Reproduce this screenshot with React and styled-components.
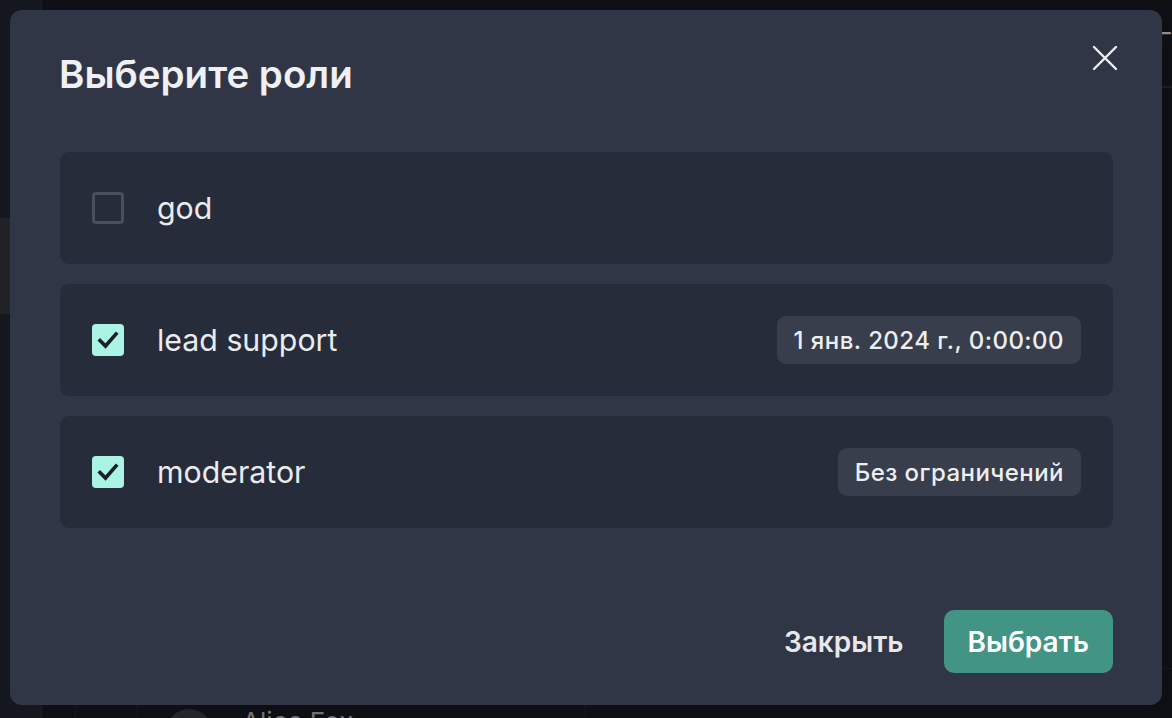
import React, { useState } from "react";
import styled, { createGlobalStyle } from "styled-components";

const GlobalStyle = createGlobalStyle`
  html, body {
    margin: 0;
    padding: 0;
    height: 100%;
    background: #0d0f14;
    font-family: Inter, "Noto Sans", "DejaVu Sans", sans-serif;
    overflow: hidden;
  }
  * { box-sizing: border-box; }
`;

/* page underneath the dialog */
const Page = styled.div`
  display: flex;
  width: 1172px;
  height: 718px;
  background: #0d0f14;
`;

const Sidebar = styled.div`
  display: flex;
  flex-direction: column;
  width: 42px;
  padding-top: 218px;
  background: #15171e;
  border-right: 1px solid #1b1d24;
`;

const SideItem = styled.div`
  height: 96px;
  background: #202226;
`;

const Main = styled.div`
  flex: 1;
  display: flex;
  flex-direction: column;
`;

const TopBar = styled.div`
  height: 88px;
  border-bottom: 2px solid #1a1c22;
  display: flex;
  justify-content: flex-end;
  align-items: flex-start;
  padding-top: 26px;
  color: #8a8d94;
  font-size: 26px;
`;

const Spacer = styled.div`
  flex: 1;
`;

const TableRow = styled.div`
  height: 50px;
  display: flex;
  border-top: 1px solid #15171c;
  overflow: hidden;
`;

const Cell = styled.div`
  width: ${(p) => p.w}px;
  height: 100%;
  border-right: 1px solid #15171c;
  display: flex;
  align-items: flex-start;
  gap: 30px;
  padding-top: 40px;
`;

const Avatar = styled.div`
  width: 46px;
  height: 46px;
  border-radius: 50%;
  background: #23252b;
  margin-left: 28px;
  flex-shrink: 0;
`;

const UserName = styled.span`
  color: #6d7079;
  font-size: 26px;
  line-height: 26px;
`;

/* dialog */
const Overlay = styled.div`
  position: fixed;
  inset: 0;
  padding: 10px 10px 13px 10px;
  display: flex;
`;

const Dialog = styled.div`
  position: relative;
  flex: 1;
  display: flex;
  flex-direction: column;
  background: #303646;
  border-radius: 12px;
  padding: 40px 49px 32px 50px;
  color: #eceef2;
`;

const Title = styled.h2`
  margin: 0 0 0 -1px;
  font-size: 38.5px;
  font-weight: 600;
  line-height: 48px;
  color: #eef0f3;
`;

const CloseButton = styled.button`
  position: absolute;
  top: 34px;
  right: 43px;
  width: 28px;
  height: 28px;
  padding: 0;
  border: none;
  background: none;
  color: #eef0f3;
  cursor: pointer;
  display: flex;
  align-items: center;
  justify-content: center;
`;

const List = styled.div`
  display: flex;
  flex-direction: column;
  gap: 20px;
  margin-top: 54px;
`;

const Row = styled.label`
  display: flex;
  align-items: center;
  height: 112px;
  padding: 0 32px;
  background: #272c3a;
  border-radius: 9px;
  cursor: pointer;
`;

const Box = styled.span`
  width: 32px;
  height: 32px;
  border-radius: 4px;
  flex-shrink: 0;
  display: flex;
  align-items: center;
  justify-content: center;
  background: ${(p) => (p.checked ? "#abf3e5" : "transparent")};
  border: ${(p) => (p.checked ? "none" : "3px solid #4a4f5c")};
`;

const Label = styled.span`
  margin-left: 33px;
  font-size: 30.3px;
  font-weight: 400;
  color: #e9ebef;
  flex: 1;
`;

const Badge = styled.span`
  height: 48px;
  padding: 0 17px;
  display: flex;
  align-items: center;
  background: #383e4b;
  border-radius: 9px;
  font-size: 24px;
  font-weight: 500;
  color: #eceef2;
  letter-spacing: 0.45px;
`;

const Footer = styled.div`
  margin-top: auto;
  display: flex;
  justify-content: flex-end;
  align-items: center;
  gap: 16px;
`;

const Button = styled.button`
  height: 63px;
  padding: 0 24px;
  border: none;
  border-radius: 10px;
  background: ${(p) => (p.primary ? "#429485" : "transparent")};
  color: ${(p) => (p.primary ? "#ffffff" : "#e6e8ec")};
  font-family: inherit;
  font-size: 28px;
  font-weight: 600;
  cursor: pointer;
`;

const Check = () => (
  <svg width="24" height="24" viewBox="0 0 24 24" fill="none">
    <path
      d="M4 12.5 L9.5 18 L20 6"
      stroke="#1b1f28"
      strokeWidth="3.6"
      strokeLinecap="square"
    />
  </svg>
);

const roles = [
  { name: "god", checked: false, until: null },
  { name: "lead support", checked: true, until: "1 янв. 2024 г., 0:00:00" },
  { name: "moderator", checked: true, until: "Без ограничений" },
];

const App = () => {
  const [items, setItems] = useState(roles);

  const toggle = (i) =>
    setItems((list) =>
      list.map((r, j) => (j === i ? { ...r, checked: !r.checked } : r))
    );

  return (
    <>
      <GlobalStyle />
      <Page>
        <Sidebar>
          <SideItem />
        </Sidebar>
        <Main>
          <TopBar>Г</TopBar>
          <Spacer />
          <TableRow>
            <Cell w={34} />
            <Cell w={62} />
            <Cell w={448}>
              <Avatar />
              <UserName>Alice Fox</UserName>
            </Cell>
          </TableRow>
        </Main>
      </Page>

      <Overlay>
        <Dialog>
          <Title>Выберите роли</Title>
          <CloseButton aria-label="close">
            <svg width="28" height="28" viewBox="0 0 28 28" fill="none">
              <path
                d="M3 3 L25 25 M25 3 L3 25"
                stroke="currentColor"
                strokeWidth="2.4"
                strokeLinecap="round"
              />
            </svg>
          </CloseButton>

          <List>
            {items.map((r, i) => (
              <Row key={r.name} onClick={() => toggle(i)}>
                <Box checked={r.checked}>{r.checked && <Check />}</Box>
                <Label>{r.name}</Label>
                {r.checked && r.until && <Badge>{r.until}</Badge>}
              </Row>
            ))}
          </List>

          <Footer>
            <Button>Закрыть</Button>
            <Button primary>Выбрать</Button>
          </Footer>
        </Dialog>
      </Overlay>
    </>
  );
};

export default App;
